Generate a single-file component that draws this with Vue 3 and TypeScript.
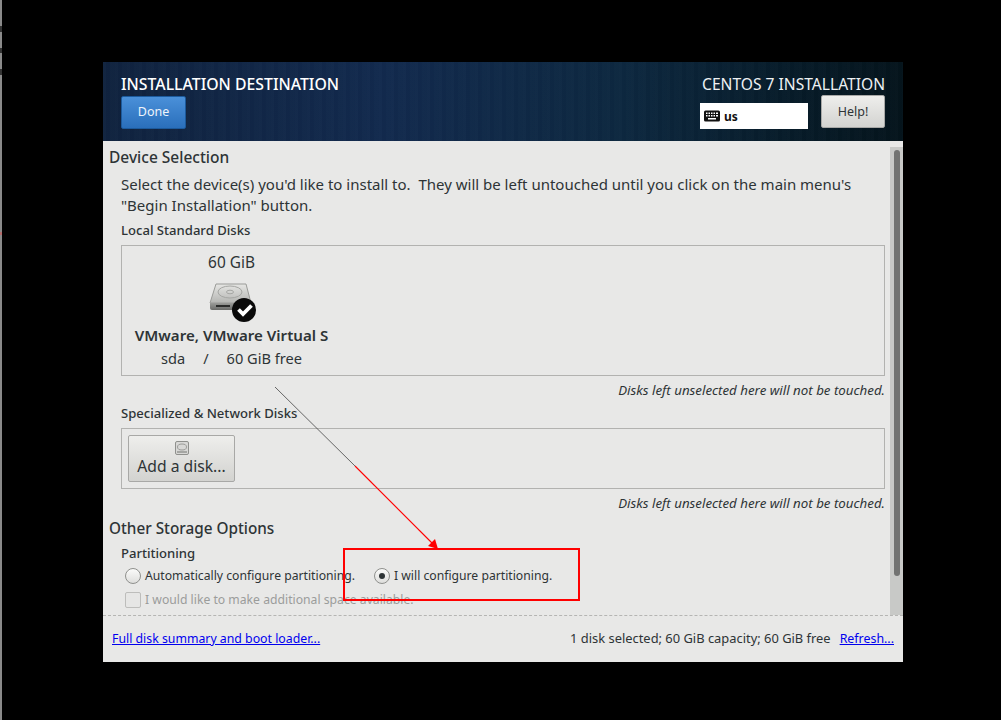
<script setup lang="ts">
const helpNote = 'Disks left unselected here will not be touched.'
</script>

<template>
  <div class="desk">
    <div class="edge"></div>
    <main class="win">
      <header class="head">
        <div class="head-left">
          <div class="title">INSTALLATION DESTINATION</div>
          <button class="done">Done</button>
        </div>
        <div class="head-right">
          <div class="product">CENTOS 7 INSTALLATION</div>
          <div class="head-tools">
            <div class="kbd">
              <svg width="16" height="12" viewBox="0 0 16 12">
                <rect x="0" y="0.5" width="16" height="11" rx="1.5" fill="#111" />
                <g fill="#fff">
                  <rect x="2" y="2.5" width="1.5" height="1.5" /><rect x="4.5" y="2.5" width="1.5" height="1.5" /><rect x="7" y="2.5" width="1.5" height="1.5" /><rect x="9.5" y="2.5" width="1.5" height="1.5" /><rect x="12" y="2.5" width="2" height="1.5" />
                  <rect x="2" y="5" width="1.5" height="1.5" /><rect x="4.5" y="5" width="1.5" height="1.5" /><rect x="7" y="5" width="1.5" height="1.5" /><rect x="9.5" y="5" width="1.5" height="1.5" /><rect x="12" y="5" width="2" height="1.5" />
                  <rect x="4" y="8" width="8" height="1.5" />
                </g>
              </svg>
              <span>us</span>
            </div>
            <button class="help">Help!</button>
          </div>
        </div>
      </header>

      <div class="body">
        <div class="scroll-content">
          <h2 class="h1">Device Selection</h2>
          <p class="intro">Select the device(s) you'd like to install to.&nbsp; They will be left untouched until you click on the main menu's<br />"Begin Installation" button.</p>
          <h3 class="h2">Local Standard Disks</h3>
          <div class="disks">
            <div class="disk">
              <div class="size">60 GiB</div>
              <svg class="disk-icon" width="48" height="40" viewBox="0 0 48 40">
                <defs>
                  <linearGradient id="top" x1="0" y1="0" x2="0" y2="1">
                    <stop offset="0" stop-color="#e6e6e4" />
                    <stop offset="1" stop-color="#b4b5b2" />
                  </linearGradient>
                  <linearGradient id="front" x1="0" y1="0" x2="0" y2="1">
                    <stop offset="0" stop-color="#9a9b98" />
                    <stop offset="1" stop-color="#6a6b69" />
                  </linearGradient>
                </defs>
                <path d="M7 1 H37 L42 20 H1 Z" fill="url(#top)" stroke="#9a9b98" stroke-width="1" />
                <ellipse cx="21" cy="9" rx="12" ry="6" fill="none" stroke="#a5a6a3" />
                <ellipse cx="21" cy="9" rx="3.5" ry="1.8" fill="none" stroke="#a5a6a3" />
                <path d="M1 20 H42 V25 Q42 27 40 27 H3 Q1 27 1 25 Z" fill="url(#front)" />
                <rect x="7" y="22" width="14" height="2" fill="#2b2c2b" />
                <circle cx="35" cy="27" r="12" fill="#0a0a0a" />
                <path d="M29.5 26.5 L34 31 L42.5 22.5" fill="none" stroke="#fff" stroke-width="3.8" />
              </svg>
              <div class="disk-name">VMware, VMware Virtual S</div>
              <div class="disk-info"><span>sda</span><span>/</span><span>60 GiB free</span></div>
            </div>
          </div>
          <div class="note">{{ helpNote }}</div>
          <h3 class="h2 second">Specialized &amp; Network Disks</h3>
          <div class="net">
            <button class="add">
              <svg width="14" height="14" viewBox="0 0 14 14">
                <rect x="0.5" y="0.5" width="13" height="13" rx="1.5" fill="#d8d8d6" stroke="#8f908d" />
                <ellipse cx="7" cy="6" rx="4.5" ry="3" fill="none" stroke="#9b9c99" />
                <rect x="2" y="10" width="10" height="2" fill="#a5a6a3" />
              </svg>
              <span>Add a disk...</span>
            </button>
          </div>
          <div class="note">{{ helpNote }}</div>
          <h2 class="h1 other">Other Storage Options</h2>
          <h3 class="h2 part">Partitioning</h3>
          <div class="radios">
            <label class="opt"><span class="radio"></span>Automatically configure partitioning.</label>
            <label class="opt"><span class="radio on"></span>I will configure partitioning.</label>
          </div>
          <label class="opt check-row"><span class="check"></span>I would like to make additional space available.</label>
        </div>
        <div class="track"><div class="thumb"></div></div>
      </div>

      <footer class="foot">
        <a class="link wide">Full disk summary and boot loader...</a>
        <div class="foot-right">
          <span class="status">1 disk selected; 60 GiB capacity; 60 GiB free</span>
          <a class="link">Refresh...</a>
        </div>
      </footer>
    </main>

    <svg class="annot" width="1001" height="720" viewBox="0 0 1001 720">
      <line x1="275" y1="387" x2="355" y2="466" stroke="#444" stroke-width="0.8" />
      <line x1="355" y1="466" x2="434" y2="545" stroke="#ff0000" stroke-width="1.1" />
      <path d="M438 549 L428 546 L435 539 Z" fill="#f00" />
      <rect x="344" y="549" width="235" height="51" fill="none" stroke="#f00" stroke-width="2" />
    </svg>
  </div>
</template>

<style>
html, body { margin: 0; background: #000; }
</style>

<style scoped>
.desk {
  position: relative;
  width: 1001px;
  height: 720px;
  background: #000;
  display: flex;
  overflow: hidden;
  font-family: "Noto Sans", "Open Sans", sans-serif;
  color: #2e3436;
}
.edge {
  width: 2px;
  height: 720px;
  flex: none;
  background: linear-gradient(#8a8a8a 0 26px, #333 26px 32px, #8a8a8a 32px 48px, #333 48px 53px, #8a8a8a 53px 69px, #333 69px 75px, #8a8a8a 75px 232px, #b56a6a 232px 235px, #8a8a8a 235px);
}
.win {
  width: 800px;
  height: 600px;
  margin: 62px 0 0 101px;
  background: #e8e8e7;
  display: flex;
  flex-direction: column;
  flex: none;
}
.head {
  height: 79px;
  flex: none;
  box-sizing: border-box;
  padding: 13px 18px 0;
  display: flex;
  justify-content: space-between;
  color: #fff;
  background:
    repeating-linear-gradient(90deg, rgba(255,255,255,0.012) 0 3px, rgba(0,0,0,0.02) 3px 7px, rgba(255,255,255,0.008) 7px 12px),
    linear-gradient(90deg, #10233f 0%, #122a4e 35%, #0d2840 65%, #071c2a 85%, #05141c 100%);
}
.title { font-size: 15.8px; line-height: 19px; font-weight: 500; white-space: nowrap; }
.done {
  display: block;
  width: 65px;
  height: 33px;
  margin: 2px 0 0;
  padding: 0 0 2px;
  border: 1px solid #1c5a9c;
  border-radius: 2px;
  background: linear-gradient(#4a90d9, #2a6fbb);
  color: #eef4fb;
  font: 12.5px "Noto Sans", sans-serif;
}
.head-right { display: flex; flex-direction: column; align-items: flex-end; }
.product { font-size: 15.6px; line-height: 19px; white-space: nowrap; color: #eef1f3; }
.head-tools { display: flex; align-items: flex-start; gap: 13px; margin-top: 1px; }
.kbd {
  width: 108px;
  height: 26px;
  margin-top: 8px;
  box-sizing: border-box;
  padding-left: 4px;
  background: #fff;
  color: #111;
  display: flex;
  align-items: center;
  gap: 4px;
  font-size: 12px;
  font-weight: 700;
}
.help {
  width: 64px;
  height: 33px;
  padding: 0;
  border: 1px solid #a8a8a6;
  border-radius: 2px;
  background: linear-gradient(#eeeeec, #d3d3d0);
  color: #2e3436;
  font: 12.5px "Noto Sans", sans-serif;
}
.body { height: 474px; flex: none; display: flex; overflow: hidden; position: relative; }
.scroll-content { width: 787px; flex: none; box-sizing: border-box; padding-left: 6px; }
.h1 { margin: 6px 0 0; font-size: 15.5px; line-height: 20px; font-weight: 500; }
.intro { margin: 7px 0 0 12px; font-size: 15px; line-height: 21px; white-space: nowrap; }
.h2 { margin: 5px 0 0 12px; font-size: 13.1px; line-height: 18px; font-weight: 500; }
.disks {
  margin: 6px 0 0 12px;
  width: 764px;
  height: 131px;
  box-sizing: border-box;
  border: 1px solid #b2b2b0;
}
.disk { width: 219px; display: flex; flex-direction: column; align-items: center; }
.size { margin-top: 7px; font-size: 15.4px; line-height: 20px; }
.disk-icon { display: block; margin-top: 10px; margin-left: 2px; }
.disk-name { margin-top: 2px; font-size: 15.1px; line-height: 20px; font-weight: 600; white-space: nowrap; }
.disk-info { margin-top: 3px; font-size: 14.6px; line-height: 20px; display: flex; gap: 18px; }
.note { margin: 6px 0 0; width: 776px; text-align: right; font-size: 13.3px; line-height: 17px; font-style: italic; }
.second { margin-top: 5px; }
.net {
  margin: 6px 0 0 12px;
  width: 764px;
  height: 61px;
  box-sizing: border-box;
  border: 1px solid #b2b2b0;
  padding: 6px;
}
.add {
  width: 107px;
  height: 47px;
  padding: 5px 0 0;
  border: 1px solid #a8a8a6;
  border-radius: 2px;
  background: linear-gradient(#eeeeec, #d3d3d0);
  display: flex;
  flex-direction: column;
  align-items: center;
  color: #2e3436;
  font: 15.7px/20px "Noto Sans", sans-serif;
}
.add span { margin-top: 1px; }
.other { margin-top: 6px; font-size: 15.3px; }
.part { margin-top: 6px; }
.radios { margin: 4px 0 0 16px; display: flex; gap: 19px; }
.opt { display: flex; align-items: center; gap: 4px; font-size: 12.2px; line-height: 20px; white-space: nowrap; }
.radio {
  width: 14px;
  height: 14px;
  border: 1px solid #8f908d;
  border-radius: 50%;
  background: linear-gradient(#fbfbfa, #dededc);
  display: flex;
  align-items: center;
  justify-content: center;
}
.radio.on::after { content: ""; width: 6px; height: 6px; border-radius: 50%; background: #2e3436; }
.check-row { margin: 4px 0 0 16px; color: #9b9c9b; }
.check { width: 14px; height: 14px; border: 1px solid #bdbdbb; border-radius: 2px; background: #e6e6e5; }
.track {
  position: absolute;
  right: 0;
  top: 6px;
  width: 13px;
  height: 468px;
  background: #c8c9c7;
}
.thumb { width: 6px; height: 426px; margin: 3px 0 0 4px; border-radius: 3px; background: #727372; }
.foot {
  height: 47px;
  flex: none;
  box-sizing: border-box;
  border-top: 1px dashed #b5b5b3;
  padding: 0 9px 2px;
  display: flex;
  align-items: center;
  justify-content: space-between;
  font-size: 12.4px;
}
.status { font-size: 12.9px; }
.wide { font-size: 12.3px; }
.foot-right { display: flex; align-items: center; gap: 9px; }
.link { color: #0000ee; text-decoration: underline; }
.annot { position: absolute; left: 0; top: 0; pointer-events: none; }
</style>
